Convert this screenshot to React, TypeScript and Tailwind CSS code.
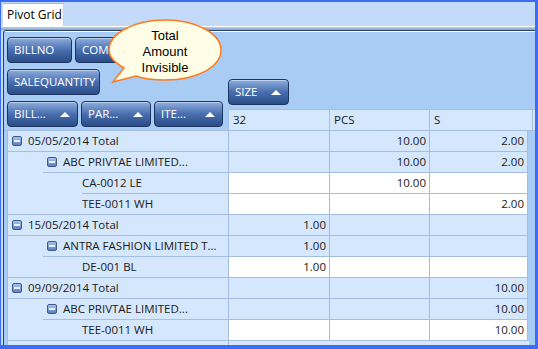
import React from 'react'

type Row = { level: 0 | 1 | 2; label: string; v: string[]; line: number }

const rows: Row[] = [
  { level: 0, label: '05/05/2014 Total', v: ['', '10.00', '2.00'], line: 0 },
  { level: 1, label: 'ABC PRIVTAE LIMITED...', v: ['', '10.00', '2.00'], line: 35 },
  { level: 2, label: 'CA-0012 LE', v: ['', '10.00', ''], line: 74 },
  { level: 2, label: 'TEE-0011 WH', v: ['', '', '2.00'], line: 0 },
  { level: 0, label: '15/05/2014 Total', v: ['1.00', '', ''], line: 0 },
  { level: 1, label: 'ANTRA FASHION LIMITED T...', v: ['1.00', '', ''], line: 35 },
  { level: 2, label: 'DE-001 BL', v: ['1.00', '', ''], line: 0 },
  { level: 0, label: '09/09/2014 Total', v: ['', '', '10.00'], line: 0 },
  { level: 1, label: 'ABC PRIVTAE LIMITED...', v: ['', '', '10.00'], line: 35 },
  { level: 2, label: 'TEE-0011 WH', v: ['', '', '10.00'], line: 0 },
]

const colW = ['w-[101px]', 'w-[100px]', 'w-[99px]']

function FieldButton({ label, w, arrow }: { label: string; w: string; arrow?: boolean }) {
  return (
    <div
      className={`${w} flex h-[26px] shrink-0 items-center justify-between rounded-[4px] border border-[#1b3560] bg-gradient-to-b from-[#8eaee0] via-[#4a6fae] to-[#2a4c88] pl-[6px] pr-[7px] text-[11.5px] text-white shadow-[inset_0_1px_0_rgba(255,255,255,0.45)]`}
    >
      <span>{label}</span>
      {arrow && <span className="h-0 w-0 border-x-[5px] border-b-[5px] border-x-transparent border-b-white" />}
    </div>
  )
}

function Minus() {
  return (
    <span className="flex h-[10px] w-[10px] shrink-0 items-center justify-center rounded-[2px] border border-[#3b5b8e] bg-gradient-to-b from-[#a9c2e8] to-[#5d7fbc]">
      <span className="h-[2px] w-[6px] bg-[#e9f1ff]" />
    </span>
  )
}

export default function App() {
  return (
    <div
      className="relative flex h-[349px] w-[538px] flex-col overflow-hidden bg-[#3c6cf6] pb-[4px] pl-[1px] pr-[3px] pt-[2px]"
      style={{ fontFamily: '"Open Sans", "Noto Sans", sans-serif' }}
    >
      <div className="flex min-h-0 flex-1 flex-col bg-[#c3dbf9]">
        <div className="flex h-[24px] shrink-0 items-end pl-[2px]">
          <div className="flex h-[23px] w-[61px] items-center border-r border-t border-r-[#ead08a] border-t-[#f2b233] bg-white pl-[4px] text-[12px] text-black">
            Pivot Grid
          </div>
        </div>
        <div className="h-[1px] shrink-0 bg-white" />
        <div className="h-[3px] shrink-0 bg-gradient-to-b from-[#b9d0ec] to-[#87a3cb]" />
        <div className="ml-[2px] flex min-h-0 flex-1 flex-col overflow-hidden rounded-tl-[3px] border-l border-t border-[#243f6a] bg-[#a9ccf5]">
          <div className="h-[1px] shrink-0 bg-white" />
          <div className="flex items-end">
            <div className="flex w-[224px] shrink-0 flex-col gap-[6px] pb-[3px] pl-[3px] pt-[5px]">
              <div className="flex gap-[3px]">
                <FieldButton label="BILLNO" w="w-[65px]" />
                <FieldButton label="COMPANY" w="w-[80px]" />
              </div>
              <FieldButton label="SALEQUANTITY" w="w-[93px]" />
              <div className="flex gap-[3px]">
                <FieldButton label="BILL..." w="w-[71px]" arrow />
                <FieldButton label="PAR..." w="w-[70px]" arrow />
                <FieldButton label="ITE..." w="w-[69px]" arrow />
              </div>
            </div>
            <div className="flex flex-col gap-[4px]">
              <FieldButton label="SIZE" w="w-[61px]" arrow />
              <div className="flex h-[21px] border-t border-[#a3bee2] text-[11.5px] text-[#1a1a1a]">
                <div className="flex w-[101px] items-center border-l border-[#a3bee2] bg-[#d5e7fc] pl-[4px]">32</div>
                <div className="flex w-[100px] items-center border-l border-[#a3bee2] bg-[#d5e7fc] pl-[4px]">PCS</div>
                <div className="flex w-[104px] items-center border-l border-r border-[#a3bee2] bg-[#d5e7fc] pl-[4px]">S</div>
                <div className="w-[2px] bg-[#d5e7fc]" />
              </div>
            </div>
          </div>
          <div className="flex flex-col border-t border-[#a3bee2] text-[11.5px] text-[#1a1a1a]">
            {rows.map((r, i) => (
              <div key={i} className="flex h-[21px]">
                <div className="ml-[3px] flex w-[221px] border-l border-[#a3bee2] bg-[#d5e7fc]">
                  <div style={{ width: r.line }} className="shrink-0" />
                  <div className="flex flex-1 items-center border-b border-[#a3bee2]">
                    {r.level === 0 && (
                      <div className="flex items-center gap-[6px] pl-[4px]">
                        <Minus />
                        <span>{r.label}</span>
                      </div>
                    )}
                    {r.level === 1 && (
                      <div className="flex items-center gap-[6px] pl-[4px]">
                        <Minus />
                        <span>{r.label}</span>
                      </div>
                    )}
                    {r.level === 2 && <span className={r.line ? 'pl-0' : 'pl-[74px]'}>{r.label}</span>}
                  </div>
                </div>
                {r.v.map((val, j) => (
                  <div
                    key={j}
                    className={`${colW[j]} flex items-center justify-end border-b border-l border-[#a3bee2] pr-[3px] ${
                      r.level === 2 ? 'bg-white' : 'bg-[#d5e7fc]'
                    } ${j === 2 ? 'border-r' : ''}`}
                  >
                    {val}
                  </div>
                ))}
              </div>
            ))}
            <div className="ml-[3px] flex h-[21px]">
              <div className="w-[221px] border-l border-[#a3bee2] bg-[#d5e7fc]" />
              <div className="w-[301px] border-l border-[#a3bee2] bg-[#d5e7fc]" />
            </div>
          </div>
        </div>
      </div>
      <div className="pointer-events-none absolute left-[104px] top-[18px]">
        <svg width="122" height="68" viewBox="0 0 122 68">
          <path
            d="M 61 2 C 93 2 117 16 117 32 C 117 49 93 62 61 62 C 49 62 40 61 32 58 L 9 64 L 20 50 C 11 45 5 39 5 32 C 5 16 29 2 61 2 Z"
            fill="#fffde6"
            stroke="#ff7a1a"
            strokeWidth="1.5"
          />
        </svg>
        <div
          className="absolute left-[11px] top-[10px] flex w-[100px] flex-col items-center text-[13px] leading-[16px] text-black"
          style={{ fontFamily: '"Liberation Sans", Arial, sans-serif' }}
        >
          <span>Total</span>
          <span>Amount</span>
          <span>Invisible</span>
        </div>
      </div>
    </div>
  )
}
